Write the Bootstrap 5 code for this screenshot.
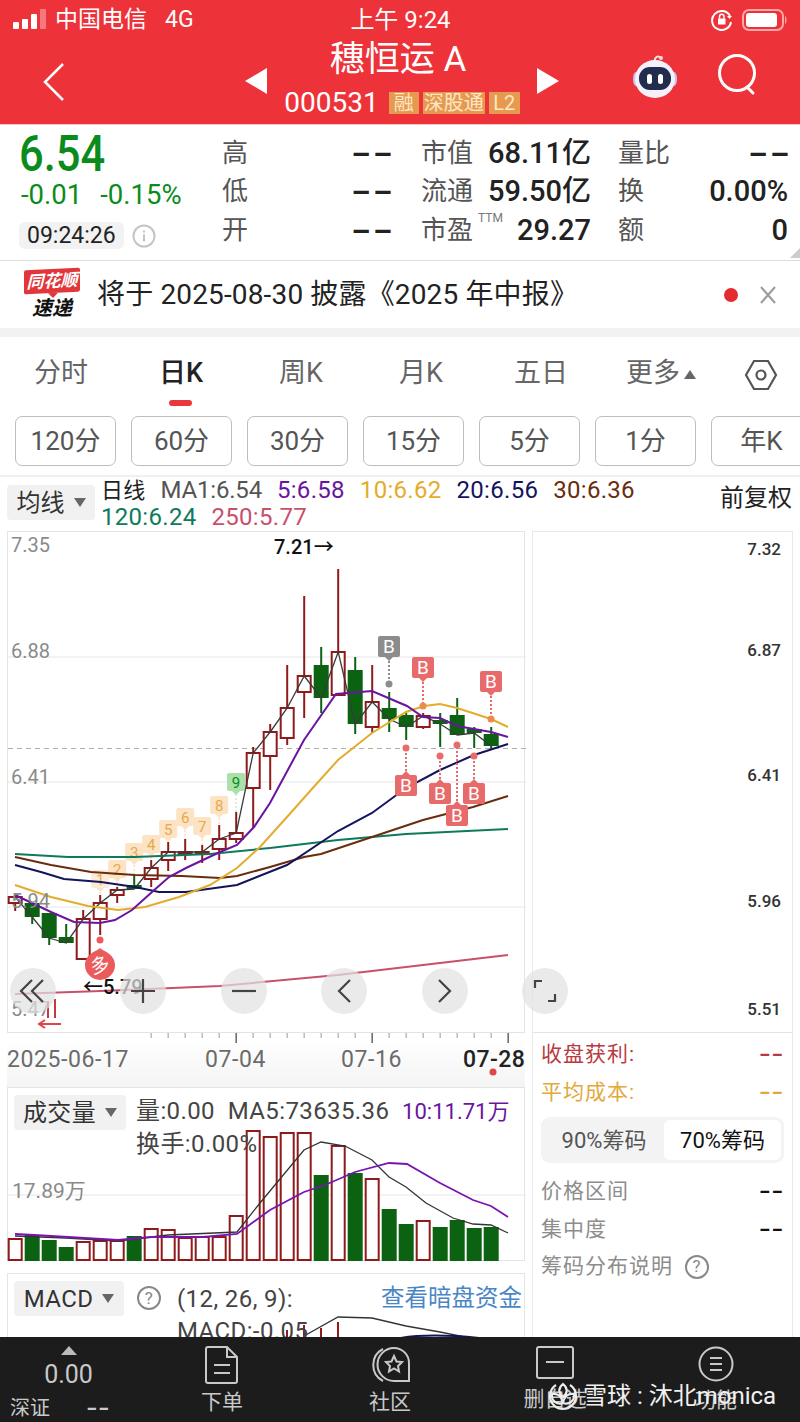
<!DOCTYPE html>
<html lang="zh-CN">
<head>
    <meta charset="UTF-8" />
    <title>穗恒运A 000531</title>
    <link href="https://cdn.jsdelivr.net/npm/bootstrap@5.3.0/dist/css/bootstrap.min.css" rel="stylesheet" />
    <style>
        html, body { margin: 0; height: 1422px; }
        body {
            width: 800px;
            overflow: hidden;
            display: flex;
            flex-direction: column;
            background: #fff;
            color: #333;
            font-family: Roboto, "Noto Sans CJK SC", sans-serif;
        }
        /* 顶部红色区域 */
        .top-head { height: 124px; flex: none; background: #ee3239; color: #fff; }
        .status-row { height: 38px; display: grid; grid-template-columns: 1fr auto 1fr; align-items: center; font-size: 23px; padding: 2px 12px 0 13px; }
        .status-time { font-size: 24px; }
        .title-row { height: 86px; display: flex; }
        .back-col { width: 245px; padding: 24px 0 0 42px; }
        .arrow-col { width: 22px; padding-top: 30px; }
        .title-col { width: 270px; text-align: center; }
        .stock-name { font-size: 35px; line-height: 44px; margin-right: 8px; }
        .stock-code { font-size: 28px; line-height: 26px; margin-top: 8px; gap: 4px; }
        .code-num { margin-right: 6px; }
        .stock-tag { background: #e69a50; color: #fde6c6; font-size: 20px; line-height: 22px; text-align: center; }
        .tool-col { padding: 16px 0 0 72px; gap: 39px; }

        /* 报价 */
        .quote-box { height: 136px; flex: none; display: flex; position: relative; border-top: 1px solid #f3c9c9; }
        .price-col { width: 222px; padding: 3px 0 0 19px; }
        .price-big { font-size: 50px; line-height: 52px; font-weight: 500; color: #0a8c1c; transform: scaleX(.87); transform-origin: left; }
        .price-sub { font-size: 27.500px; line-height: 30px; color: #0a8c1c; padding-left: 2px; gap: 18px; }
        .time-row { margin-top: 12px; }
        .time-chip { background: #f2f2f2; border-radius: 6px; font-size: 23px; line-height: 27px; padding: 0 8px; color: #222; }
        .quote-col { padding-top: 9px; font-size: 26px; color: #555; }
        .quote-line { height: 38.500px; display: flex; justify-content: space-between; align-items: center; position: relative; }
        .quote-val { color: #222; font-size: 29px; font-weight: 500; line-height: 1; }
        .dash-val { display: inline-block; transform: scaleX(1.900); transform-origin: right; font-weight: 700; line-height: 1; margin-right: -3px; }
        .ttm-mark { position: absolute; left: 57px; top: -2px; font-size: 12px; color: #777; }
        .corner-mark { position: absolute; right: 0; bottom: 2px; width: 0; height: 0; border-left: 10px solid transparent; border-bottom: 10px solid #ccc; }

        /* 资讯条 */
        .news-row { height: 68px; flex: none; display: flex; align-items: center; border-top: 1px solid #ddd; padding-left: 24px; }
        .news-logo { width: 56px; text-align: center; }
        .logo-red { background: #e3363b; color: #fff; font-size: 17px; line-height: 24px; font-weight: 700; font-style: italic; border-radius: 2px; transform: skewY(-3deg); position: relative; }
        .logo-red::after { content: ""; position: absolute; left: 24px; bottom: -5px; border: 5px solid transparent; border-bottom: 0; border-top-color: #e3363b; }
        .logo-black { font-size: 20px; line-height: 24px; font-weight: 700; font-style: italic; color: #111; margin-top: 3px; }
        .news-text { font-size: 28px; letter-spacing: .15px; color: #222; margin-left: 17px; white-space: nowrap; }
        .news-dot { width: 14px; height: 14px; border-radius: 50%; background: #e32b30; margin-left: auto; }
        .news-close { width: 62px; padding-left: 22px; line-height: 1; }
        .gap-band { height: 9px; flex: none; background: #f2f2f2; }

        /* 周期 */
        .period-tabs { height: 71px; flex: none; display: grid; grid-template-columns: repeat(6, 120px) 1fr; padding: 1px 0 0 1px; align-items: center; text-align: center; font-size: 27px; color: #666; }
        .period-on { color: #222; font-weight: 500; position: relative; }
        .period-on::after { content: ""; position: absolute; left: 48px; top: 47px; width: 23px; height: 6px; border-radius: 3px; background: #e8383d; }
        .more-up { display: inline-block; vertical-align: middle; margin-left: 4px; border: 6px solid transparent; border-top: 0; border-bottom: 9px solid #666; }
        .chip-row { height: 67px; flex: none; display: flex; gap: 15px; padding: 8px 0 0 15px; overflow: hidden; }
        .chip-item { flex: none; width: 101px; height: 50px; border: 1px solid #bdbdbd; border-radius: 7px; display: flex; align-items: center; justify-content: center; font-size: 26px; color: #555; }

        /* 均线图例 */
        .legend-row { height: 56px; flex: none; display: flex; border-top: 2px solid #f0f0f0; padding-left: 7px; position: relative; }
        .drop-pick { background: #f1f1f1; border-radius: 4px; display: flex; align-items: center; justify-content: center; gap: 9px; font-size: 24px; color: #333; }
        .drop-caret { border: 6px solid transparent; border-bottom: 0; border-top: 9px solid #666; }
        .legend-pick { width: 88px; height: 35px; margin-top: 8px; }
        .legend-text { margin-left: 6px; font-size: 24px; line-height: 27px; letter-spacing: .3px; }
        .legend-text span { margin-right: 15px; }
        .legend-day { font-size: 22px; color: #222; }
        .legend-ma1 { color: #555; letter-spacing: -.2px; }
        .legend-right { position: absolute; right: 8px; top: 3px; font-size: 24px; color: #222; }

        /* 主体 */
        .main-area { flex: 1 1 0; min-height: 0; display: flex; padding-left: 7px; gap: 7px; overflow: hidden; }
        .left-col { width: 518px; flex: none; }
        .chart-frame { height: 502px; position: relative; border: 1px solid #e4e4e4; }
        .chart-frame > svg, .vol-panel > svg, .macd-panel > svg { position: absolute; left: 0; top: 0; overflow: visible; }
        .zoom-bar { position: absolute; left: 2px; top: 436px; display: flex; gap: 54.500px; z-index: 3; }
        .zoom-btn { width: 46px; height: 46px; border-radius: 50%; background: rgba(226, 226, 226, .72); display: flex; align-items: center; justify-content: center; flex: none; }
        .zoom-first { margin-right: 9.500px; }
        .axis-box { height: 54px; background: linear-gradient(#fff 10%, #f4f4f4); }
        .vol-panel { height: 174px; position: relative; border: 1px solid #e4e4e4; }
        .panel-head { position: relative; z-index: 2; display: flex; padding: 7px 0 0 6px; font-size: 24px; line-height: 32px; color: #444; letter-spacing: .4px; }
        .vol-pick { width: 112px; height: 35px; flex: none; }
        .vol-text { margin-left: 10px; }
        .vol-ten { color: #6a14a0; font-size: 22px; letter-spacing: 0; }
        .macd-panel { height: 100px; position: relative; border: 1px solid #e4e4e4; margin-top: 12px; }
        .macd-pick { width: 110px; height: 35px; flex: none; }
        .help-ring { width: 24px; height: 24px; border: 2px solid #888; border-radius: 50%; display: inline-flex; align-items: center; justify-content: center; font-size: 17px; line-height: 1; color: #888; }
        .macd-link { position: absolute; right: 2px; top: 8px; color: #4a86c5; font-size: 23.500px; letter-spacing: 0; }
        .right-col { width: 261px; flex: none; border: 1px solid #e8e8e8; border-bottom: 0; position: relative; }
        .right-top { height: 501px; position: relative; border-bottom: 1px solid #e4e4e4; }
        .right-top svg { position: absolute; left: 0; top: 0; }
        .chip-side { padding: 3px 8px 0; font-size: 21px; letter-spacing: 1px; }
        .side-line { height: 37.500px; display: flex; justify-content: space-between; align-items: center; }
        .seg-box { height: 46px; margin: 6px 0 10px; background: #f3f3f3; border-radius: 9px; display: flex; padding: 3px; align-items: stretch; }
        .seg-off { width: 120px; display: flex; align-items: center; justify-content: center; color: #555; font-size: 22px; letter-spacing: 0; }
        .seg-on { flex: 1; background: #fff; border-radius: 6px; display: flex; align-items: center; justify-content: center; color: #111; font-size: 22px; letter-spacing: 0; }
        .side-gray { color: #8d8d8d; }
        .side-val { font-size: 21px; letter-spacing: 0; transform: scaleX(1.500); margin-right: 0; }
        .side-black { color: #111; }

        /* 底栏 */
        .foot-bar { height: 85px; flex: none; background: #1c1c1c; color: #c9c9c9; display: grid; grid-template-columns: 137px 170px 166px 164px 158px; position: relative; z-index: 4; }
        .foot-cell { display: flex; flex-direction: column; align-items: center; padding-top: 9px; font-size: 21px; line-height: 26px; }
        .foot-cell svg { margin-bottom: 5px; }
        .foot-index { padding-top: 9px; font-size: 20px; }
        .foot-up { width: 0; height: 0; margin: 0 auto; border: 8px solid transparent; border-top: 0; border-bottom: 9px solid #bbb; }
        .foot-num { text-align: center; font-size: 25px; line-height: 30px; margin-top: 5px; }
        .foot-sub { display: flex; justify-content: space-between; padding: 3px 27px 0 10px; }
        .foot-dash { transform: scaleX(1.500); align-self: center; margin-right: 0; }
        .water-mark { position: absolute; left: 548px; top: 41px; display: flex; align-items: center; gap: 5px; color: #f0f0f0; font-size: 24px; white-space: nowrap; z-index: 5; }
    </style>
</head>
<body>

    <div class="top-head">
        <div class="status-row">
            <div class="d-flex align-items-center">
                <svg width="34" height="22" viewBox="0 0 34 22"><rect x="0" y="13" width="6" height="7" rx="1" fill="#fff"/><rect x="9" y="10" width="6" height="10" rx="1" fill="#fff"/><rect x="18" y="5" width="6" height="15" rx="1" fill="#fff"/><rect x="27" y="0" width="6" height="20" rx="1" fill="#fff" opacity=".35"/></svg>
                <span class="ms-2">中国电信</span>
                <span style="margin-left:18px">4G</span>
            </div>
            <div class="status-time">上午 9:24</div>
            <div class="d-flex align-items-center justify-content-end">
                <svg width="24" height="24" viewBox="0 0 24 24" fill="none" stroke="#fff" stroke-width="2"><path d="M20 8A9.500 9.500 0 1 0 21 14"/><path d="M17 8h5l-2.500 3z" fill="#fff" stroke="none"/><rect x="8" y="10.500" width="7.500" height="6" fill="#fff" stroke="none"/><path d="M9.500 10.500V8.500a2.200 2.200 0 0 1 4.500 0v2" stroke-width="1.500"/></svg>
                <svg class="ms-2" width="46" height="24" viewBox="0 0 46 24"><rect x="1" y="2" width="40" height="20" rx="6" fill="none" stroke="#ffa7a7" stroke-width="2"/><rect x="4" y="5" width="31" height="14" rx="3" fill="#fff"/><path d="M43 8c2 1 2 7 0 8z" fill="#ffa7a7"/></svg>
            </div>
        </div>
        <div class="title-row">
            <div class="back-col">
                <svg width="24" height="40" viewBox="0 0 24 40" fill="none" stroke="#fff" stroke-width="2.500"><path d="M21 2 3 20 21 38"/></svg>
            </div>
            <div class="arrow-col"><svg width="22" height="26" viewBox="0 0 22 26"><path d="M22 0V26L0 13z" fill="#fff"/></svg></div>
            <div class="title-col">
                <div class="stock-name">穗恒运 A</div>
                <div class="stock-code d-flex justify-content-center align-items-center">
                    <span class="code-num">000531</span>
                    <span class="stock-tag" style="width:30px">融</span><span class="stock-tag" style="width:62px">深股通</span><span class="stock-tag" style="width:31px">L2</span>
                </div>
            </div>
            <div class="arrow-col"><svg width="22" height="26" viewBox="0 0 22 26"><path d="M0 0V26L22 13z" fill="#fff"/></svg></div>
            <div class="tool-col d-flex">
                <svg width="48" height="46" viewBox="0 0 48 46"><path d="M24 8c-1-5 3-7 6-4" fill="none" stroke="#f3dede" stroke-width="2"/><circle cx="30" cy="4" r="2" fill="#f3dede"/><ellipse cx="5" cy="25" rx="3" ry="7" fill="#c9c2ee"/><ellipse cx="43" cy="25" rx="3" ry="7" fill="#c9c2ee"/><ellipse cx="24" cy="25" rx="20" ry="19" fill="#f4f1fb"/><rect x="8" y="13" width="32" height="23" rx="11" fill="#222c4c"/><rect x="16" y="20" width="5" height="10" rx="2.500" fill="#fff"/><rect x="27" y="20" width="5" height="10" rx="2.500" fill="#fff"/></svg>
                <svg width="40" height="42" viewBox="0 0 40 42" fill="none" stroke="#fff" stroke-width="3"><circle cx="19" cy="19" r="17.500"/><path d="M29 33l6 6" stroke-linecap="round"/></svg>
            </div>
        </div>
    </div>

    <div class="quote-box">
        <div class="price-col">
            <div class="price-big">6.54</div>
            <div class="price-sub d-flex"><span>-0.01</span><span>-0.15%</span></div>
            <div class="d-flex align-items-center gap-2 time-row">
                <span class="time-chip">09:24:26</span>
                <svg width="24" height="24" viewBox="0 0 24 24" fill="none" stroke="#c4c4c4" stroke-width="2"><circle cx="12" cy="12" r="10.500"/><path d="M12 10.500v7M12 6.500v2"/></svg>
            </div>
        </div>
        <div class="quote-col" style="width:169px">
            <div class="quote-line"><span>高</span><span class="quote-val dash-val">--</span></div>
            <div class="quote-line"><span>低</span><span class="quote-val dash-val">--</span></div>
            <div class="quote-line"><span>开</span><span class="quote-val dash-val">--</span></div>
        </div>
        <div class="quote-col" style="width:170px;margin-left:30px">
            <div class="quote-line"><span>市值</span><span class="quote-val">68.11亿</span></div>
            <div class="quote-line"><span>流通</span><span class="quote-val">59.50亿</span></div>
            <div class="quote-line"><span>市盈</span><span class="ttm-mark">TTM</span><span class="quote-val">29.27</span></div>
        </div>
        <div class="quote-col" style="width:170px;margin-left:27px">
            <div class="quote-line"><span>量比</span><span class="quote-val dash-val">--</span></div>
            <div class="quote-line"><span>换</span><span class="quote-val">0.00%</span></div>
            <div class="quote-line"><span>额</span><span class="quote-val">0</span></div>
        </div>
        <div class="corner-mark"></div>
    </div>

    <div class="news-row">
        <div class="news-logo">
            <div class="logo-red">同花顺</div>
            <div class="logo-black">速递</div>
        </div>
        <div class="news-text">将于 2025-08-30 披露《2025 年中报》</div>
        <div class="news-dot"></div>
        <div class="news-close">
            <svg width="16" height="18" viewBox="0 0 16 18" fill="none" stroke="#9a9a9a" stroke-width="2"><path d="M1 1l14 16M15 1 1 17"/></svg>
        </div>
    </div>
    <div class="gap-band"></div>

    <div class="period-tabs">
        <div>分时</div>
        <div class="period-on">日K</div>
        <div>周K</div>
        <div>月K</div>
        <div>五日</div>
        <div>更多<span class="more-up"></span></div>
        <div>
            <svg width="34" height="34" viewBox="0 0 34 34" fill="none" stroke="#555" stroke-width="2.200"><path d="M10 3h14l8 14-8 14H10L2 17z"/><circle cx="17" cy="17" r="4.500"/></svg>
        </div>
    </div>

    <div class="chip-row">
        <div class="chip-item">120分</div>
        <div class="chip-item">60分</div>
        <div class="chip-item">30分</div>
        <div class="chip-item">15分</div>
        <div class="chip-item">5分</div>
        <div class="chip-item">1分</div>
        <div class="chip-item">年K</div>
    </div>

    <div class="legend-row">
        <div class="drop-pick legend-pick">均线<i class="drop-caret"></i></div>
        <div class="legend-text">
            <div><span class="legend-day">日线</span><span class="legend-ma1">MA1:6.54</span><span style="color:#6a14a0">5:6.58</span><span style="color:#e3ac2c">10:6.62</span><span style="color:#14145c">20:6.56</span><span style="color:#6a2c0c">30:6.36</span></div>
            <div><span style="color:#0d7a5c">120:6.24</span><span style="color:#c8506a">250:5.77</span></div>
        </div>
        <div class="legend-right">前复权</div>
    </div>

    <div class="main-area">
        <div class="left-col">
            <div class="chart-frame">
                <svg id="klineSvg" width="518" height="502" viewBox="8 532 518 502"></svg>
                <div class="zoom-bar">
                    <div class="zoom-btn zoom-first"><svg width="28" height="26" viewBox="0 0 28 26" fill="none" stroke="#444" stroke-width="2.200"><path d="M13 2 2 13l11 11M24 2 13 13l11 11"/></svg></div>
                    <div class="zoom-btn"><svg width="24" height="24" viewBox="0 0 24 24" fill="none" stroke="#444" stroke-width="2.200"><path d="M0 12h24M12 0v24"/></svg></div>
                    <div class="zoom-btn"><svg width="24" height="24" viewBox="0 0 24 24" fill="none" stroke="#444" stroke-width="2.200"><path d="M0 12h24"/></svg></div>
                    <div class="zoom-btn"><svg width="16" height="26" viewBox="0 0 16 26" fill="none" stroke="#444" stroke-width="2.200"><path d="M14 2 3 13l11 11"/></svg></div>
                    <div class="zoom-btn"><svg width="16" height="26" viewBox="0 0 16 26" fill="none" stroke="#444" stroke-width="2.200"><path d="M2 2l11 11L2 24"/></svg></div>
                    <div class="zoom-btn"><svg width="24" height="24" viewBox="0 0 24 24" fill="none" stroke="#444" stroke-width="2.200"><path d="M2 9V2h7M15 22h7v-7"/></svg></div>
                </div>
            </div>
            <div class="axis-box">
                <svg id="axisSvg" width="518" height="54" viewBox="7 1033 518 54"></svg>
            </div>
            <div class="vol-panel">
                <svg id="volSvg" width="518" height="174" viewBox="8 1088 518 174"></svg>
                <div class="panel-head">
                    <div class="drop-pick vol-pick">成交量<i class="drop-caret"></i></div>
                    <div class="vol-text">
                        <div>量:0.00&nbsp; MA5:73635.36&nbsp; <span class="vol-ten">10:11.71万</span></div>
                        <div>换手:0.00%</div>
                    </div>
                </div>
            </div>
            <div class="macd-panel">
                <svg id="macdSvg" width="518" height="100" viewBox="8 1274 518 100"></svg>
                <div class="panel-head">
                    <div class="drop-pick macd-pick">MACD<i class="drop-caret"></i></div>
                    <div class="d-flex align-items-start" style="margin:5px 0 0 13px"><span class="help-ring">?</span></div>
                    <div style="margin:2px 0 0 16px">
                        <div>(12, 26, 9):</div>
                        <div>MACD:-0.05</div>
                    </div>
                    <div class="macd-link">查看暗盘资金</div>
                </div>
            </div>
        </div>

        <div class="right-col">
            <div class="right-top">
                <svg width="259" height="501" viewBox="533 532 259 501">
                    <g font-size="17" font-weight="500" fill="#333" text-anchor="end">
                        <text x="781" y="555">7.32</text>
                        <text x="781" y="656">6.87</text>
                        <text x="781" y="781">6.41</text>
                        <text x="781" y="907">5.96</text>
                        <text x="781" y="1015">5.51</text>
                    </g>
                </svg>
            </div>
            <div class="chip-side">
                <div class="side-line" style="color:#b93a42"><span>收盘获利:</span><span class="dash-val side-val">--</span></div>
                <div class="side-line" style="color:#e3a83c"><span>平均成本:</span><span class="dash-val side-val">--</span></div>
                <div class="seg-box">
                    <div class="seg-off">90%筹码</div>
                    <div class="seg-on">70%筹码</div>
                </div>
                <div class="side-line side-gray"><span>价格区间</span><span class="dash-val side-val side-black">--</span></div>
                <div class="side-line side-gray"><span>集中度</span><span class="dash-val side-val side-black">--</span></div>
                <div class="side-line side-gray justify-content-start gap-2"><span>筹码分布说明</span><span class="help-ring ms-1">?</span></div>
            </div>
        </div>
    </div>

    <div class="foot-bar">
        <div class="foot-index">
            <div class="foot-up"></div>
            <div class="foot-num">0.00</div>
            <div class="foot-sub"><span>深证</span><span class="dash-val foot-dash">--</span></div>
        </div>
        <div class="foot-cell">
            <svg width="34" height="38" viewBox="0 0 34 38" fill="none" stroke="#c9c9c9" stroke-width="2"><path d="M3 1h19l10 10v24a2 2 0 0 1-2 2H3a2 2 0 0 1-2-2V3a2 2 0 0 1 2-2z"/><path d="M22 1v10h10M9 19h16M9 27h16"/></svg>
            <span>下单</span>
        </div>
        <div class="foot-cell">
            <svg width="40" height="38" viewBox="0 0 40 38" fill="none" stroke="#c9c9c9" stroke-width="2"><path d="M13 3a18 18 0 0 0 0 32"/><path d="M24 2a15 15 0 0 1 15 15v18H24a16.500 16.500 0 0 1 0-33z"/><path d="M24 10l2.500 5.500 5.500.5-4 4 1 5.500-5-3-5 3 1-5.500-4-4 5.500-.5z"/></svg>
            <span>社区</span>
        </div>
        <div class="foot-cell">
            <svg width="38" height="34" viewBox="0 0 38 34" fill="none" stroke="#c9c9c9" stroke-width="2"><rect x="1" y="1" width="36" height="31" rx="2"/><path d="M10 16h18"/></svg>
            <span style="margin-top:1px">删自选</span>
        </div>
        <div class="foot-cell">
            <svg width="36" height="36" viewBox="0 0 36 36" fill="none" stroke="#c9c9c9" stroke-width="2"><circle cx="18" cy="18" r="16.500"/><path d="M12 12h12M12 18h12M12 24h12"/></svg>
            <span>功能</span>
        </div>
        <div class="water-mark">
            <svg width="30" height="30" viewBox="0 0 30 30" fill="none" stroke="#ececec" stroke-width="2.200"><path d="M8 4a13 13 0 1 0 14 0"/><path d="M15 3c5 4 5 9 0 13-5-4-5-9 0-13zM4 13c6-1 10 3 11 9-6 2-12-2-11-9zM26 13c-6-1-10 3-11 9 6 2 12-2 11-9z"/></svg>
            <span>雪球 : 沐北monica</span>
        </div>
    </div>

    <script src="https://cdn.jsdelivr.net/npm/bootstrap@5.3.0/dist/js/bootstrap.bundle.min.js"></script>
    <script>
        document.addEventListener('DOMContentLoaded', () => {
            const RED = '#8f1a1c';
            const GREEN = '#0b6312';
            const colX = i => 15.2 + 17 * i;

            // r/g, 上影, 实体上, 实体下, 下影
            const candles = [
                ['r', 893, 897, 903, 911], ['g', 903, 903, 917, 924], ['g', 913, 913, 938, 945], ['g', 924, 937, 943, 943],
                ['r', 910, 919, 959, 959], ['r', 895, 903, 919, 935], ['r', 887, 890, 895, 903], ['g', 875, 885, 889, 889],
                ['r', 860, 868, 879, 887], ['r', 842, 852, 860, 871], ['r', 839, 852, 854, 860], ['r', 845, 852, 854, 863],
                ['r', 825, 839, 849, 860], ['r', 812, 833, 839, 843], ['r', 747, 753, 788, 828], ['r', 724, 732, 756, 790],
                ['r', 665, 708, 738, 745], ['r', 596, 676, 692, 718], ['g', 647, 665, 698, 713], ['r', 569, 652, 695, 695],
                ['g', 657, 670, 724, 734], ['r', 665, 702, 727, 733], ['g', 692, 708, 719, 732], ['g', 713, 715, 727, 740],
                ['r', 713, 716, 727, 729], ['g', 713, 720, 724, 747], ['g', 698, 715, 735, 735], ['g', 727, 729, 733, 748],
                ['g', 727, 734, 746, 750]
            ];

            const maLines = [
                ['#c8506a', '15,994 101,991 220,986 338,975 508,955'],
                ['#0d7a5c', '15,854 68,857 135,857 210,854 270,848 338,840 406,834 508,829'],
                ['#6a2c0c', '15,857 51,865 91,872 135,875 182,876 220,878 237,876 270,867 304,857 321,854 372,837 423,820 473,807 508,796'],
                ['#14145c', '15,865 41,872 64,879 101,882 135,887 159,892 186,892 237,885 287,865 338,831 372,813 406,788 440,770 474,755 508,744'],
                ['#e3ac2c', '15,885 51,897 88,906 118,910 145,907 179,897 210,885 237,868 260,847 287,817 311,790 338,760 372,733 406,712 424,706 440,704 457,708 491,719 508,727'],
                ['#6a14a0', '15,895 51,912 74,922 100,923 115,920 132,910 152,892 169,877 186,868 203,860 220,852 237,845 254,827 270,803 277,790 304,740 336,694 372,691 407,706 423,717 440,718 457,726 474,729 491,732 508,737']
            ];

            let k = '';
            // 网格
            [657, 782, 907].forEach(y => { k += `<line x1="8" x2="526" y1="${y}" y2="${y}" stroke="#e6e6e6"/>`; });
            k += '<line x1="8" x2="526" y1="748.500" y2="748.500" stroke="#b9ae9e" stroke-dasharray="5 4"/>';

            // 九转序号
            ['1', '2', '3', '4', '5', '6', '7', '8'].forEach((n, i) => {
                const x = colX(5 + i);
                const top = [870, 860, 843, 835, 820, 808, 817, 796][i];
                k += `<line x1="${x}" x2="${x}" y1="${top + 18}" y2="${top + 32}" stroke="#fbe3c4" stroke-width="1.500" stroke-dasharray="2 2"/>`;
                k += `<rect x="${x - 9}" y="${top}" width="18" height="18" rx="2" fill="#fbe3c4" opacity="${i < 1 ? .7 : 1}"/>`;
                k += `<path d="M${x - 4} ${top + 18}h8l-4 4z" fill="#fbe3c4"/>`;
                k += `<text x="${x}" y="${top + 15}" font-size="15" fill="#e8a94c" text-anchor="middle">${n}</text>`;
            });
            k += `<line x1="236" x2="236" y1="794" y2="835" stroke="#cfeccf" stroke-width="1.500" stroke-dasharray="2 2"/>`;
            k += '<rect x="227" y="773" width="18" height="18" rx="2" fill="#a9e2a9"/><path d="M232 791h8l-4 4z" fill="#a9e2a9"/>';
            k += '<text x="236" y="788" font-size="15" fill="#0a8c1c" text-anchor="middle">9</text>';

            // K线
            candles.forEach((c, i) => {
                const x = colX(i);
                const color = c[0] === 'r' ? RED : GREEN;
                k += `<line x1="${x}" x2="${x}" y1="${c[1]}" y2="${c[4]}" stroke="${color}" stroke-width="2"/>`;
                if (c[0] === 'r') {
                    k += `<rect x="${x - 6.500}" y="${c[2]}" width="13" height="${c[3] - c[2]}" fill="#fff" stroke="${color}" stroke-width="2"/>`;
                } else {
                    k += `<rect x="${x - 7.500}" y="${c[2]}" width="15" height="${c[3] - c[2]}" fill="${color}"/>`;
                }
            });

            // 收盘折线 MA1
            const closes = candles.map((c, i) => colX(i) + ',' + (c[0] === 'r' ? c[2] : c[3]));
            k += `<polyline points="${closes.join(' ')}" fill="none" stroke="#3a3a3a" stroke-width="1.300"/>`;
            maLines.forEach(m => { k += `<polyline points="${m[1]}" fill="none" stroke="${m[0]}" stroke-width="2"/>`; });

            // B点
            const marks = [
                [389, 636, 684, '#8c8c8c', 1], [423, 657, 706, '#e86b6b', 1], [491, 671, 719, '#e86b6b', 1],
                [406, 775, 748, '#e86b6b', 0], [440, 783, 756, '#e86b6b', 0], [457, 805, 745, '#e86b6b', 0], [474, 783, 756, '#e86b6b', 0]
            ];
            marks.forEach(m => {
                const [x, boxY, dotY, color, above] = m;
                const stemY = above ? boxY + 21 : boxY;
                const dotColor = dotY < 730 && color !== '#8c8c8c' ? '#ef8a4e' : color;
                k += `<line x1="${x}" x2="${x}" y1="${stemY}" y2="${dotY}" stroke="${color}" stroke-width="2" stroke-dasharray="2 2"/>`;
                k += `<circle cx="${x}" cy="${dotY}" r="3.500" fill="${dotColor}"/>`;
                k += `<rect x="${x - 11}" y="${boxY}" width="22" height="21" rx="2" fill="${color}"/>`;
                k += above ? `<path d="M${x - 4} ${boxY + 21}h8l-4 4z" fill="${color}"/>` : `<path d="M${x - 4} ${boxY}h8l-4 -4z" fill="${color}"/>`;
                k += `<text x="${x}" y="${boxY + 17}" font-size="19" fill="#fff" text-anchor="middle">B</text>`;
            });

            // 多
            k += '<circle cx="100" cy="940" r="3.500" fill="#ec5b5b"/>';
            k += '<path d="M100 948c3 3 15 6 15 17a15 15 0 0 1-30 0c0-11 12-14 15-17z" fill="#ec5b5b"/>';
            k += '<text x="100" y="972" font-size="19" fill="#fff" text-anchor="middle" transform="rotate(-15 100 965)">多</text>';

            // 价格标注
            k += '<text x="274" y="554" font-size="20" font-weight="500" fill="#111">7.21→</text>';
            k += '<text x="83" y="994" font-size="20" font-weight="500" fill="#111">←5.79</text>';
            k += '<g font-size="20" fill="#8a8a8a">';
            [['7.35', 552], ['6.88', 658], ['6.41', 784], ['5.94', 908], ['5.47', 1016]].forEach(t => {
                k += `<text x="11" y="${t[1]}">${t[0]}</text>`;
            });
            k += '</g>';
            k += '<path d="M48 1002v16M55 999v19" stroke="#c9363c" stroke-width="2" fill="none"/>';
            k += '<path d="M61 1024H39m6-4-6 4 6 4" stroke="#e0454a" stroke-width="2" fill="none"/>';
            document.getElementById('klineSvg').innerHTML = k;

            // 时间轴
            let a = '';
            for (let i = 8; i < 30; i++) {
                const x = colX(i);
                const long = i === 13 || i === 21 || i === 29;
                a += `<line x1="${x}" x2="${x}" y1="1033" y2="${long ? 1043 : 1038}" stroke="${long ? '#666' : '#bbb'}" stroke-width="1.500"/>`;
            }
            a += '<g font-size="23" fill="#6b6b6b" letter-spacing=".6">';
            a += '<text x="7" y="1067">2025-06-17</text><text x="205" y="1067">07-04</text><text x="341" y="1067">07-16</text></g>';
            a += '<text x="463" y="1067" font-size="23" font-weight="500" fill="#222" letter-spacing=".4">07-28</text>';
            a += '<circle cx="493" cy="1072" r="3.500" fill="#e0454a"/>';
            document.getElementById('axisSvg').innerHTML = a;

            // 成交量
            const vols = [1239, 1235, 1240, 1247, 1242, 1241, 1241, 1236, 1229, 1230, 1238, 1237, 1237, 1216, 1131, 1137, 1133, 1133, 1175, 1146, 1173, 1179, 1209, 1224, 1221, 1227, 1220, 1228, 1227];
            let v = '<line x1="8" x2="526" y1="1195" y2="1195" stroke="#e6e6e6"/>';
            vols.forEach((top, i) => {
                const x = colX(i);
                if (candles[i][0] === 'r') {
                    v += `<rect x="${x - 6.500}" y="${top}" width="13" height="${1260 - top}" fill="#fff" stroke="${RED}" stroke-width="2"/>`;
                } else {
                    v += `<rect x="${x - 7.500}" y="${top}" width="15" height="${1261 - top}" fill="${GREEN}"/>`;
                }
            });
            v += '<polyline points="15,1236 66,1238 118,1241 168,1235 237,1232 260,1203 304,1150 321,1142 345,1146 372,1160 389,1177 406,1187 426,1203 453,1218 473,1224 491,1225 508,1233" fill="none" stroke="#333" stroke-width="1.300"/>';
            v += '<polyline points="15,1234 34,1235 68,1237 118,1240 152,1237 203,1237 237,1234 270,1210 304,1192 325,1185 355,1172 389,1163 407,1164 440,1183 473,1200 491,1206 508,1217" fill="none" stroke="#7a14b0" stroke-width="1.800"/>';
            v += '<text x="12" y="1198" font-size="21" fill="#8a8a8a">17.89万</text>';
            document.getElementById('volSvg').innerHTML = v;

            // MACD 只露出上面一点
            let m = '<polyline points="304,1336 338,1317 372,1318 406,1326 440,1332 470,1338" fill="none" stroke="#333" stroke-width="1.300"/>';
            m += `<path d="M287 1330v10M304 1325v15M321 1328v12M338 1322v18" stroke="${RED}" stroke-width="2"/>`;
            m += '<path d="M400 1338q30-5 80 0" fill="none" stroke="#14145c" stroke-width="1.800"/>';
            document.getElementById('macdSvg').innerHTML = m;
        });
    </script>
</body>
</html>
